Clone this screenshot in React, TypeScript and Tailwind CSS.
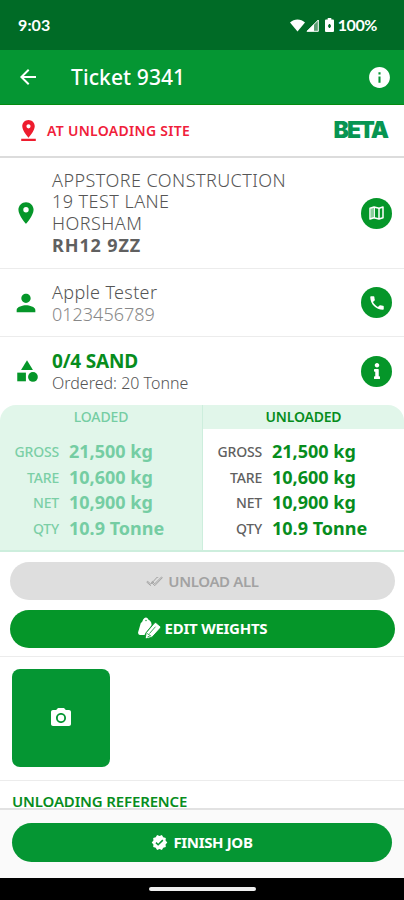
import type { ReactNode } from "react";
import {
  MdArrowBack,
  MdCategory,
  MdInfo,
  MdPerson,
  MdPhone,
  MdPhotoCamera,
  MdPinDrop,
  MdPlace,
  MdVerified,
} from "react-icons/md";
import { FaInfo } from "react-icons/fa";

const weights = [
  { label: "GROSS", value: "21,500 kg" },
  { label: "TARE", value: "10,600 kg" },
  { label: "NET", value: "10,900 kg" },
  { label: "QTY", value: "10.9 Tonne" },
];

function StatusBar() {
  return (
    <div className="flex h-[50px] items-center justify-between bg-[#006b26] pl-[18px] pr-[27px] text-white">
      <span className="font-['Lato',sans-serif] text-[16px] font-bold leading-none tracking-[0.1px]">9:03</span>
      <div className="flex items-center">
        <svg className="h-[13px] w-[15px]" viewBox="0 0 15 13" fill="currentColor">
          <path d="M0 3.6C4.2-.6 10.8-.6 15 3.6L7.5 12.5z" />
        </svg>
        <svg className="ml-[1px] h-[13px] w-[13px]" viewBox="0 0 13 13">
          <path d="M12.3 1v11.3H1z" fill="#fff" fillOpacity=".35" stroke="#fff" />
          <path d="M8 5.3v7H1z" fill="#fff" />
        </svg>
        <svg className="ml-[6px] h-[14px] w-[9px]" viewBox="0 0 9 14">
          <path d="M2.7 0h3.6v1.500H8a1 1 0 0 1 1 1V13a1 1 0 0 1-1 1H1a1 1 0 0 1-1-1V2.500a1 1 0 0 1 1-1h1.700z" fill="#fff" />
          <path d="M4.5 6v4M3 8h3" stroke="#006b26" strokeWidth="1.5" />
        </svg>
        <span className="ml-[4px] font-['Lato',sans-serif] text-[16px] font-bold leading-none tracking-[-0.4px]">100%</span>
      </div>
    </div>
  );
}

function RoundButton({ children }: { children: ReactNode }) {
  return (
    <button className="flex h-[31px] w-[31px] shrink-0 items-center justify-center rounded-full bg-[#059629] text-white">
      {children}
    </button>
  );
}

function MapIcon() {
  return (
    <svg className="h-[14px] w-[15px]" viewBox="0 0 15 14" fill="none" stroke="currentColor" strokeWidth="1.5" strokeLinejoin="round">
      <path d="M1 2.2L5 1l5 1.200L14 1v10.800L10 13l-5-1.200L1 13z" />
      <path d="M5.200 1v11M10 2v11" />
      <path d="M3 2v10" strokeWidth="1.800" strokeOpacity=".6" />
    </svg>
  );
}

function DoubleCheckIcon() {
  return (
    <svg className="h-[11px] w-[17px]" viewBox="0 0 17 11" fill="none" stroke="currentColor" strokeWidth="1">
      <path d="M5.500 6.200l.9-.8 2.300 2.400L15.500 1l.8.8-7.600 7.900z" />
      <path d="M4.800 9.700L.8 6.200l.9-.8 3.100 2.700L11.300 1l.7.800" />
    </svg>
  );
}

function EditWeightsIcon() {
  return (
    <svg className="h-[22px] w-[23px]" viewBox="0 0 23 22">
      <path d="M2.800 6Q4.500 5 5.300 2.300 7.300-.6 9.800 1.400q.5 1.400 2 2.200 1.900 1.200 1.800 4.600L8 15.500 6.500 18H1.800Q-.2 17.600.1 15.300z" fill="#fff" />
      <circle cx="8" cy="3.500" r=".7" fill="#059629" />
      <path
        d="M18.200 5.800l4.100 3.400q.9.900.1 1.900l-8.300 9.100-5.300 1.500q-1.500.2-1.400-1.300l.7-4.600 8.300-9.700q.9-.9 1.800-.3z"
        fill="#fff"
        stroke="#059629"
        strokeWidth=".9"
      />
      <path d="M9.200 16.500l4 2.700M9.500 20l2.300-1M11.500 16.500l6-6.800" stroke="#059629" strokeWidth=".8" />
    </svg>
  );
}

function WeightTable({ muted = false }: { muted?: boolean }) {
  return (
    <div className="flex flex-col pt-[10px]">
      {weights.map((w) => (
        <div key={w.label} className="flex h-[25.6px] items-center">
          <span
            className={`w-[59px] text-right text-[14px] font-medium tracking-[-0.2px] ${muted ? "text-[#7bcfa6]" : "text-[#606060]"}`}
          >
            {w.label}
          </span>
          <span
            className={`ml-[10px] whitespace-nowrap text-[18px] font-bold ${muted ? "text-[#75cda3]" : "text-[#078d1d]"}`}
          >
            {w.value}
          </span>
        </div>
      ))}
    </div>
  );
}

export default function App() {
  return (
    <div className="flex h-[900px] w-[404px] flex-col overflow-hidden bg-white font-['Noto_Sans',sans-serif]">
      <StatusBar />

      <header className="flex h-[55px] items-center border-b border-[#058a12] bg-[#059633] pl-[16px] pr-[12px] text-white">
        <MdArrowBack className="h-[24px] w-[24px]" />
        <h1 className="ml-[31px] flex-1 text-[21px] font-medium leading-none tracking-[0.1px]">Ticket 9341</h1>
        <MdInfo className="h-[25px] w-[25px]" />
      </header>

      <div className="flex h-[53px] items-center border-b-2 border-[#dcdcdc] pl-[16px] pr-[17px]">
        <MdPinDrop className="h-[25px] w-[25px] text-[#ee1c2e]" />
        <span className="ml-[6px] flex-1 text-[14px] font-semibold tracking-[0.3px] text-[#f0203a]">
          AT UNLOADING SITE
        </span>
        <span className="font-['Inter',sans-serif] text-[23px] font-black leading-none tracking-[-2px] text-[#079552]">
          BETA
        </span>
      </div>

      <div className="flex h-[111px] items-center border-b border-[#ececec] pr-[12px]">
        <MdPlace className="ml-[13px] h-[26px] w-[26px] text-[#059629]" />
        <div className="ml-[13px] flex-1 text-[18px] font-light leading-[21.7px] tracking-[0.45px] text-[#555]">
          <p>APPSTORE CONSTRUCTION</p>
          <p>19 TEST LANE</p>
          <p>HORSHAM</p>
          <p className="font-bold tracking-[0.9px] text-[#606060]">RH12 9ZZ</p>
        </div>
        <RoundButton>
          <MapIcon />
        </RoundButton>
      </div>

      <div className="flex h-[68px] items-center border-b border-[#ececec] pr-[12px]">
        <MdPerson className="ml-[12px] h-[28px] w-[28px] text-[#059629]" />
        <div className="ml-[12px] flex-1 pt-[2px] text-[18px] font-light leading-[21.5px]">
          <p className="tracking-[0.35px] text-[#555]">Apple Tester</p>
          <p className="text-[#888]">0123456789</p>
        </div>
        <RoundButton>
          <MdPhone className="h-[18px] w-[18px]" />
        </RoundButton>
      </div>

      <div className="flex h-[68px] items-center pr-[12px]">
        <MdCategory className="ml-[14px] h-[26px] w-[26px] text-[#059629]" />
        <div className="ml-[12px] flex-1 pt-[2px]">
          <p className="text-[19px] font-bold leading-[22px] tracking-[-0.2px] text-[#078d1d]">0/4 SAND</p>
          <p className="text-[16px] font-light leading-[22px] text-[#555]">Ordered: 20 Tonne</p>
        </div>
        <RoundButton>
          <FaInfo className="h-[16px] w-[16px]" />
        </RoundButton>
      </div>

      <div className="flex h-[147px] border-b-2 border-[#cdeedd] bg-white">
        <section className="w-[202px] rounded-tl-[16px] bg-[#e1f6ea]">
          <h2 className="h-[24px] text-center text-[14px] font-medium leading-[24px] tracking-[-0.1px] text-[#75cda3]">
            LOADED
          </h2>
          <WeightTable muted />
        </section>
        <section className="w-[202px] border-l border-[#cdeedd]">
          <h2 className="h-[24px] rounded-tr-[16px] bg-[#e1f6ea] text-center text-[14px] font-semibold leading-[24px] tracking-[-0.2px] text-[#078d1d]">
            UNLOADED
          </h2>
          <WeightTable />
        </section>
      </div>

      <div className="flex h-[105px] flex-col gap-[10px] border-b border-[#ececec] pl-[10px] pr-[9px] pt-[10px]">
        <button className="flex h-[38px] items-center justify-center gap-[5px] rounded-full bg-[#dedede] text-[15px] font-semibold tracking-[-0.35px] text-[#a2a2a2]">
          <DoubleCheckIcon />
          UNLOAD ALL
        </button>
        <button className="flex h-[38px] items-center justify-center gap-[4px] rounded-full bg-[#059629] pb-[2px] text-[15px] font-bold tracking-[-0.25px] text-white">
          <EditWeightsIcon />
          EDIT WEIGHTS
        </button>
      </div>

      <div className="h-[124px] border-b border-[#ececec] px-[12px] pt-[12px]">
        <button className="flex h-[98px] w-[98px] items-center justify-center rounded-[8px] bg-[#059633] text-white">
          <MdPhotoCamera className="h-[24px] w-[24px]" />
        </button>
      </div>

      <div className="h-[27px] pl-[12px] pt-[11px]">
        <h2 className="text-[15px] font-semibold leading-[18px] tracking-[-0.15px] text-[#078d1d]">
          UNLOADING REFERENCE
        </h2>
      </div>

      <footer className="h-[70px] border-t-2 border-[#e2e2e2] bg-[#fafafa] px-[12px] pt-[13px]">
        <button className="flex h-[39px] w-full items-center justify-center gap-[5px] rounded-full bg-[#059633] text-[15px] font-bold tracking-[-0.35px] text-white">
          <MdVerified className="h-[17px] w-[17px]" />
          FINISH JOB
        </button>
      </footer>

      <div className="flex h-[22px] justify-center bg-black pt-[9px]">
        <div className="h-[4px] w-[107px] rounded-full bg-[#eee]" />
      </div>
    </div>
  );
}
